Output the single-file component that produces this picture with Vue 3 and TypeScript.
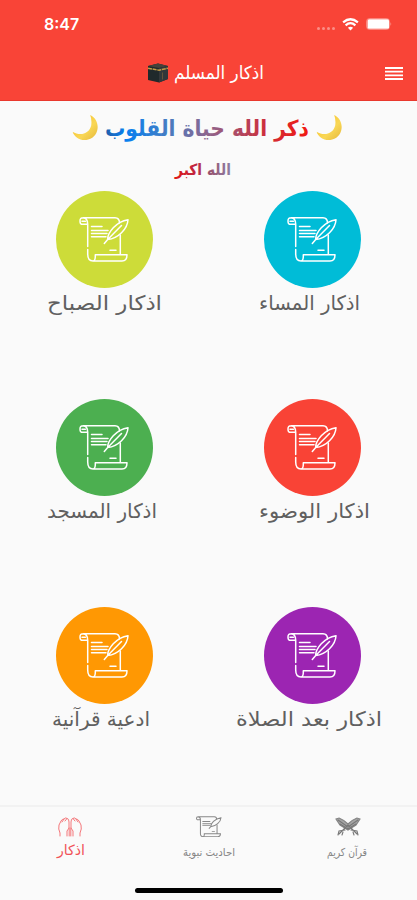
<script setup lang="ts">
interface Category {
  label: string
  color: string
  left: number
  width: number
}

const categories: Category[] = [
  { label: 'اذكار المساء', color: '#00bcd7', left: 51, width: 101 },
  { label: 'اذكار الصباح', color: '#cddc39', left: 47, width: 115 },
  { label: 'اذكار الوضوء', color: '#f94336', left: 51, width: 111 },
  { label: 'اذكار المسجد', color: '#4caf50', left: 47, width: 110 },
  { label: 'اذكار بعد الصلاة', color: '#9c25b2', left: 28, width: 146 },
  { label: 'ادعية قرآنية', color: '#ff9803', left: 52, width: 98 },
]
</script>

<template>
  <div class="screen">
    <header class="header">
      <div class="status">
        <span class="time">8:47</span>
        <div class="indicators">
          <span class="signal"><i v-for="n in 4" :key="n" /></span>
          <svg class="wifi" width="17" height="13" viewBox="0 0 17 13">
            <path d="M8.5 12.6 5.9 9.8Q8.5 7.9 11.1 9.8Z" fill="#fff" />
            <path d="M1.1 4.3Q8.5-1.8 15.9 4.3M3.6 7.3Q8.5 3.1 13.4 7.3" fill="none" stroke="#fff" stroke-width="2.200" />
          </svg>
          <svg width="26" height="12" viewBox="0 0 26 12">
            <rect x=".5" y=".5" width="23" height="11" rx="3" fill="none" stroke="#fff" stroke-opacity=".35" />
            <rect x="1.500" y="1.200" width="21.500" height="9.600" rx="1.500" fill="#fff" />
            <path d="M24.5 4Q26 6 24.5 8Z" fill="#fff" opacity=".5" />
          </svg>
        </div>
      </div>
      <div class="bar">
        <div class="title">
          <svg width="22" height="20" viewBox="0 0 22 20">
            <path d="M1 3 11 .5 21 3V16L12 19.5 1 17Z" fill="#20292b" />
            <path d="M1 3 11 .5 21 3 12 5Z" fill="#45423a" />
            <path d="M12 5 21 3V16L12 19.5Z" fill="#32373a" />
            <path d="M1 5.2 12 7.2 21 5.2" fill="none" stroke="#c19a45" stroke-width="1.500" stroke-dasharray="4 .7" />
            <path d="M15.5 9.5V16.5" stroke="#63543a" />
          </svg>
          <svg width="100" height="32" viewBox="0 0 100 32">
            <text class="arabic" x="91" y="22" font-size="18" fill="#fff" textLength="90" lengthAdjust="spacingAndGlyphs">اذكار المسلم</text>
          </svg>
        </div>
        <svg class="menu" width="18" height="13" viewBox="0 0 18 13">
          <path d="M0 1H18M0 4.700H18M0 8.300H18M0 12H18" stroke="#fff" stroke-width="1.800" />
        </svg>
      </div>
    </header>

    <main class="content">
      <svg class="hero" width="417" height="84" viewBox="0 0 417 84">
        <defs>
          <linearGradient id="verse" gradientUnits="userSpaceOnUse" x1="309" y1="0" x2="105" y2="0">
            <stop offset="0" stop-color="#f21a12" />
            <stop offset=".2" stop-color="#d02c38" />
            <stop offset=".5" stop-color="#8c668f" />
            <stop offset=".72" stop-color="#3d7ec9" />
            <stop offset=".9" stop-color="#087ff0" />
            <stop offset="1" stop-color="#225da9" />
          </linearGradient>
          <linearGradient id="praise" gradientUnits="userSpaceOnUse" x1="231" y1="0" x2="175" y2="0">
            <stop offset="0" stop-color="#8d7fa5" />
            <stop offset=".4" stop-color="#98516d" />
            <stop offset=".6" stop-color="#bd2745" />
            <stop offset="1" stop-color="#df1717" />
          </linearGradient>
          <linearGradient id="moonlight" x1="0" y1="0" x2="1" y2="1">
            <stop offset="0" stop-color="#f8bd20" />
            <stop offset=".6" stop-color="#f9d755" />
            <stop offset="1" stop-color="#e5b83a" />
          </linearGradient>
          <symbol id="moon" viewBox="0 0 26 26">
            <path d="M18 0C29 5 28 22 16 25C9 27 2 23 0 17C8 22 17 19 19 11Q20 5 18 0Z" fill="url(#moonlight)" />
          </symbol>
        </defs>
        <use href="#moon" x="72.500" y="14" width="25.500" height="25.500" />
        <use href="#moon" x="316.500" y="14" width="25.500" height="25.500" />
        <text class="arabic bold" x="309" y="34.500" font-size="22" fill="url(#verse)" textLength="204" lengthAdjust="spacingAndGlyphs">ذكر الله حياة القلوب</text>
        <text class="arabic bold" x="231" y="74" font-size="15.500" fill="url(#praise)" textLength="56" lengthAdjust="spacingAndGlyphs">الله اكبر</text>
      </svg>

      <section class="grid">
        <article v-for="item in categories" :key="item.label" class="card">
          <div class="disc" :style="{ background: item.color }">
            <svg width="51" height="48" viewBox="0 0 51 48" fill="none" stroke="#fff" stroke-width="1.500" stroke-linejoin="round" stroke-linecap="round">
              <path d="M8.700 8.300H2.500Q1 8 1 5Q1 1.800 4 1.800H36Q40.500 2 40.500 7M4 1.800Q8.700 2 8.700 8.300V30.500M8.700 33.500V38Q8.700 45 14 45H43Q48 45 48 38.700H16.300V41Q16 45 14 45M41.300 19V38.500M3 5.200H6.500" />
              <path d="M12.500 10.500H23M12.500 14.500H29M12.500 17.600H28M12.500 20.800H27M31 34.300H37" />
              <path d="M25.300 27.500 28.700 23.500C28.500 17 37 5.500 49 3.700C48.500 13 39 22.500 28.700 23.500L42.500 9.500" />
            </svg>
          </div>
          <svg class="caption" width="208" height="34" viewBox="0 0 208 34">
            <text class="arabic" :x="item.left + item.width" y="22" font-size="20" fill="#606060" :textLength="item.width" lengthAdjust="spacingAndGlyphs">{{ item.label }}</text>
          </svg>
        </article>
      </section>
    </main>

    <nav class="tabs">
      <div class="tab">
        <svg width="26" height="22" viewBox="0 0 26 22" fill="none" stroke="#777" stroke-width="1.100" stroke-linecap="round">
          <path d="M1 3 4 2Q9 4 13 8Q17 4 22 2L25 3 21 9 13 14 5 9Z" fill="#a5a5a5" stroke="#858585" />
          <path d="M3 4 13 11 23 4M5 8 13 13 21 8M13 9 22 18M13 9 4 18M10 14 4 15 3 19M16 14 22 15 23 19M8 16 7 19M18 16 19 19" />
        </svg>
        <svg width="60" height="22" viewBox="0 0 60 22">
          <text class="arabic" x="49" y="14.500" font-size="11" fill="#858585" textLength="40" lengthAdjust="spacingAndGlyphs">قرآن كريم</text>
        </svg>
      </div>
      <div class="tab">
        <svg width="26" height="22" viewBox="0 0 51 48" preserveAspectRatio="none" fill="none" stroke="#888" stroke-width="2">
          <path d="M8.700 8.300H2.500Q1 8 1 5Q1 1.800 4 1.800H36Q40.500 2 40.500 7M4 1.800Q8.700 2 8.700 8.300V38Q8.700 45 14 45H43Q48 45 48 38.700H16.300V41Q16 45 14 45M41.300 19V38.500M12.500 12H28M12.500 16H30M12.500 20H28M31 34H37" />
          <path d="M25.300 27.500 28.700 23.500C28.500 17 37 5.500 49 3.700C48.500 13 39 22.500 28.700 23.500" />
        </svg>
        <svg width="60" height="22" viewBox="0 0 60 22">
          <text class="arabic" x="56" y="14.500" font-size="11" fill="#858585" textLength="52" lengthAdjust="spacingAndGlyphs">احاديث نبوية</text>
        </svg>
      </div>
      <div class="tab">
        <svg width="26" height="22" viewBox="0 0 26 22" fill="none" stroke="#f4777a" stroke-width="1" stroke-linecap="round">
          <path d="M3 20V17Q1 13 2 9L4 5Q5 3 7 3Q9 1 10 2.500Q12 2.500 12 6V12L10 15V20M5 6 7 3M8 5 10 2.500M12.200 12V20M23 20V17Q25 13 24 9L22 5Q21 3 19 3Q17 1 16 2.500Q14 2.500 14 6V12L16 15V20M21 6 19 3M18 5 16 2.500M13.800 12V20" />
        </svg>
        <svg width="60" height="22" viewBox="0 0 60 22">
          <text class="arabic" x="45" y="13.500" font-size="14" fill="#f15258" textLength="28" lengthAdjust="spacingAndGlyphs">اذكار</text>
        </svg>
      </div>
      <div class="home" />
    </nav>
  </div>
</template>

<style>
body {
  background: #fafafa;
}
</style>

<style scoped>
.screen {
  width: 417px;
  height: 900px;
  display: flex;
  flex-direction: column;
  overflow: hidden;
  background: #fafafa;
  font-family: Inter, "Liberation Sans", sans-serif;
}
svg {
  display: block;
  flex: none;
}
.arabic {
  font-family: "DejaVu Sans", sans-serif;
  direction: rtl;
  text-anchor: start;
}
.bold {
  font-weight: 700;
}
.header {
  height: 101px;
  box-sizing: border-box;
  background: #f94437;
  border-bottom: 1px solid #e9382d;
}
.status {
  height: 48px;
  padding: 0 25px 0 44px;
  display: flex;
  align-items: center;
  justify-content: space-between;
}
.time {
  color: #fff;
  font-size: 16px;
  line-height: 20px;
  font-weight: 600;
}
.indicators {
  display: flex;
  align-items: center;
}
.signal {
  display: flex;
  gap: 2px;
  padding: 8px 7px 0 0;
}
.signal i {
  width: 3px;
  height: 3px;
  border-radius: 50%;
  background: rgba(255, 255, 255, 0.4);
}
.wifi {
  margin-right: 7px;
}
.bar {
  height: 50px;
  display: flex;
  align-items: center;
  justify-content: space-between;
  padding: 0 14px 0 147px;
}
.title {
  display: flex;
  align-items: center;
  gap: 4px;
}
.content {
  height: 704px;
}
.grid {
  display: grid;
  direction: rtl;
  grid-template-columns: 208px 208px;
  justify-content: end;
  grid-auto-rows: 208px;
}
.card {
  direction: ltr;
  display: flex;
  flex-direction: column;
  align-items: center;
  padding-top: 6px;
}
.disc {
  width: 97px;
  height: 97px;
  border-radius: 50%;
  display: flex;
  align-items: center;
  justify-content: center;
}
.tabs {
  height: 95px;
  box-sizing: border-box;
  border-top: 2px solid #f2f2f2;
  display: grid;
  direction: rtl;
  grid-template-columns: repeat(3, 139px);
  grid-template-rows: 81px 5px;
}
.tab {
  direction: ltr;
  display: flex;
  flex-direction: column;
  align-items: center;
  gap: 3px;
  padding-top: 9px;
}
.home {
  grid-column: 1 / 4;
  justify-self: center;
  width: 148px;
  height: 5px;
  border-radius: 3px;
  background: #000;
}
</style>
